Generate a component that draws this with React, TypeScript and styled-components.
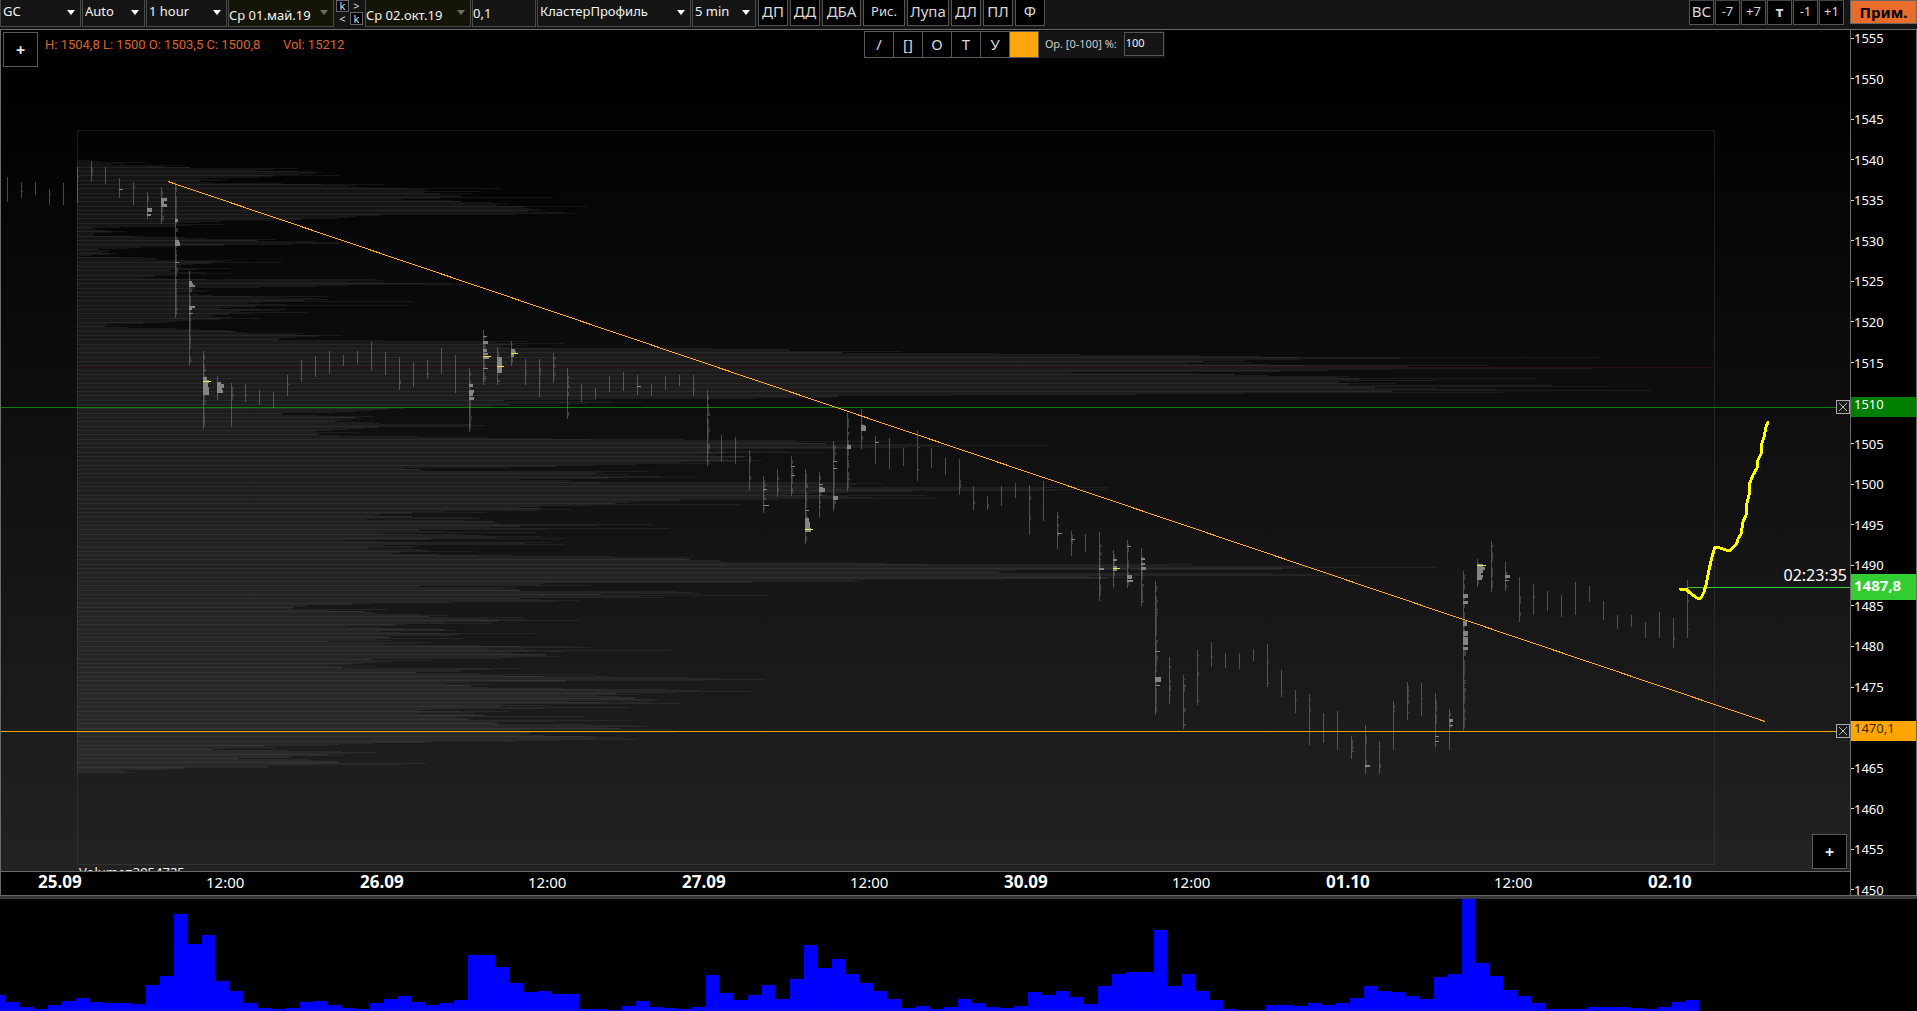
import React from "react";
import styled, { createGlobalStyle } from "styled-components";

const GlobalStyle = createGlobalStyle`
  * { box-sizing: border-box; }
  html, body, #root { height: 100%; }
  body {
    margin: 0;
    background: #000;
    color: #f2f2f2;
    font-family: "Noto Sans", "Open Sans", sans-serif;
    font-size: 13px;
    overflow: hidden;
  }
  button, input, select { font: inherit; color: inherit; margin: 0; }
`;

/* ---------- data ---------- */

const STEP = 14;
const FIRST_X = 7;
const CHART_TOP = 30;
const PROFILE_LEFT = 77;
const PROFILE_RIGHT = 1714;
const PROFILE_TOP = 160;

// right edge of the volume profile, one value per pixel row
const profile: number[] = [
  90, 100, 146, 125, 112, 185, 165, 190, 298, 275, 257, 313, 322, 316, 300, 339, 273, 259, 206, 228,
  222, 200, 210, 282, 384, 355, 349, 367, 500, 424, 428, 481, 424, 473, 440, 461, 461, 554, 440, 402,
  450, 461, 492, 508, 498, 496, 587, 524, 530, 540, 546, 528, 565, 574, 516, 380, 355, 349, 339, 302,
  282, 220, 200, 178, 225, 190, 175, 120, 92, 96, 106, 126, 112, 95, 94, 93, 143, 186, 206, 275,
  257, 316, 351, 339, 292, 224, 176, 142, 129, 98, 110, 107, 102, 117, 110, 92, 80, 143, 157, 155,
  232, 222, 281, 212, 192, 180, 176, 182, 230, 196, 170, 178, 206, 231, 176, 173, 155, 143, 167, 375,
  383, 347, 384, 453, 465, 349, 316, 261, 194, 196, 208, 206, 192, 176, 198, 212, 329, 282, 314, 328,
  304, 413, 261, 247, 286, 408, 255, 229, 220, 286, 278, 241, 308, 253, 229, 212, 216, 233, 260, 220,
  192, 178, 167, 143, 108, 118, 105, 127, 176, 200, 229, 235, 245, 304, 294, 342, 318, 294, 282, 278,
  384, 528, 494, 564, 514, 526, 503, 510, 713, 789, 790, 902, 842, 998, 1080, 1200, 1260, 1598, 1400, 1300,
  1246, 1203, 1251, 1188, 1266, 1488, 1408, 1500, 1592, 1391, 1330, 1280, 1071, 1194, 1235, 1269, 1349, 1337, 1538, 1359,
  1438, 1340, 1338, 1395, 1349, 1552, 1609, 1375, 1437, 1497, 1652, 1392, 1503, 1244, 1136, 952, 838, 832, 755, 597,
  504, 611, 642, 588, 509, 560, 491, 450, 404, 388, 373, 355, 335, 282, 282, 318, 375, 355, 363, 339,
  351, 335, 373, 380, 471, 485, 469, 378, 363, 347, 333, 316, 359, 320, 318, 341, 418, 488, 551, 684,
  795, 891, 801, 826, 934, 1048, 946, 909, 848, 726, 709, 787, 826, 726, 697, 715, 746, 744, 722, 728,
  762, 734, 681, 711, 636, 595, 556, 507, 404, 420, 426, 649, 603, 595, 628, 592, 660, 697, 608, 520,
  571, 558, 832, 882, 856, 791, 852, 1107, 1044, 1108, 1056, 913, 848, 811, 787, 926, 848, 873, 938, 779,
  681, 640, 628, 615, 739, 591, 538, 518, 540, 571, 535, 445, 486, 412, 380, 373, 412, 473, 480, 366,
  463, 494, 494, 500, 653, 596, 520, 490, 669, 547, 419, 445, 536, 382, 463, 482, 542, 498, 565, 431,
  343, 378, 550, 524, 565, 384, 418, 412, 369, 420, 428, 473, 400, 391, 437, 513, 613, 692, 685, 690,
  720, 722, 857, 886, 1192, 1170, 1305, 1436, 1295, 1282, 1015, 997, 1001, 1273, 1311, 1360, 1090, 1136, 1107, 1002,
  853, 861, 752, 545, 540, 590, 419, 516, 503, 520, 520, 677, 693, 700, 601, 770, 640, 663, 520, 538,
  579, 557, 453, 373, 353, 308, 305, 294, 293, 387, 329, 365, 371, 378, 420, 449, 429, 524, 486, 524,
  580, 498, 444, 492, 406, 395, 347, 382, 404, 445, 457, 380, 402, 535, 459, 451, 384, 390, 464, 378,
  394, 327, 431, 418, 386, 480, 575, 591, 524, 489, 670, 563, 510, 514, 545, 547, 560, 518, 500, 371,
  431, 392, 376, 363, 350, 329, 376, 342, 520, 493, 461, 460, 416, 480, 596, 503, 609, 690, 720, 763,
  702, 566, 471, 445, 490, 471, 471, 487, 564, 668, 700, 751, 676, 615, 640, 597, 620, 636, 634, 660,
  655, 566, 650, 680, 503, 551, 500, 630, 542, 430, 420, 509, 475, 419, 475, 485, 586, 456, 473, 469,
  633, 556, 493, 498, 586, 633, 650, 607, 620, 672, 520, 600, 675, 530, 520, 545, 596, 625, 595, 637,
  559, 515, 425, 372, 339, 327, 265, 276, 226, 212, 286, 341, 376, 351, 327, 344, 291, 289, 238, 309,
  314, 339, 339, 427, 402, 268, 267, 267, 185, 167, 121, 126, 137,
];

// high and low of every hourly bar
const ranges: [number, number][] = [
  [177, 202], [182, 198], [182, 195], [189, 205], [183, 205], [167, 203], [161, 182], [167, 184], [178, 198], [182, 205],
  [192, 219], [187, 224], [182, 318], [271, 365], [351, 429], [376, 400], [383, 427], [384, 402], [390, 405], [392, 408],
  [375, 396], [360, 382], [356, 377], [351, 374], [355, 366], [351, 364], [342, 370], [352, 375], [357, 390], [362, 387],
  [360, 378], [348, 374], [355, 393], [368, 432], [330, 385], [347, 385], [341, 366], [359, 385], [359, 397], [353, 383],
  [368, 419], [384, 402], [388, 399], [376, 392], [372, 391], [375, 395], [384, 396], [376, 390], [375, 386], [375, 396],
  [390, 466], [435, 462], [437, 464], [450, 490], [476, 513], [469, 497], [456, 496], [469, 544], [472, 518], [441, 511],
  [413, 491], [409, 449], [436, 464], [438, 469], [448, 466], [430, 481], [448, 468], [458, 475], [459, 495], [486, 510],
  [496, 510], [486, 506], [483, 498], [485, 535], [481, 521], [512, 549], [531, 556], [534, 552], [532, 601], [550, 588],
  [540, 588], [548, 606], [581, 715], [657, 704], [675, 729], [650, 705], [642, 667], [653, 668], [653, 669], [649, 661],
  [644, 687], [670, 697], [690, 713], [694, 745], [713, 743], [711, 750], [736, 759], [725, 774], [741, 774], [701, 750],
  [682, 720], [683, 716], [693, 748], [709, 750], [571, 731], [559, 587], [541, 592], [562, 591], [577, 622], [584, 615],
  [591, 611], [595, 617], [582, 615], [586, 602], [601, 620], [615, 629], [615, 627], [622, 638], [612, 638], [618, 648],
  [580, 638],
];

// heavy clusters: bar index, top, bottom, width
const clusters: [number, number, number, number][] = [
  [8, 189, 190, 4], [10, 208, 212, 5], [10, 214, 216, 4], [11, 198, 201, 6], [11, 201, 204, 3], [11, 204, 207, 6],
  [12, 219, 222, 3], [12, 240, 242, 4], [12, 242, 246, 5], [12, 262, 263, 4], [13, 281, 283, 3], [13, 283, 285, 4],
  [13, 285, 287, 6], [13, 306, 308, 6], [13, 308, 310, 3], [13, 313, 314, 4], [14, 377, 380, 4],
  [14, 380, 383, 6], [14, 383, 387, 5], [14, 387, 395, 6], [15, 382, 384, 4], [15, 384, 388, 7], [15, 388, 390, 5],
  [15, 390, 393, 6], [33, 384, 387, 4], [33, 390, 393, 5], [33, 393, 396, 4], [33, 397, 400, 5], [34, 336, 337, 4],
  [34, 341, 344, 5], [34, 349, 352, 4], [34, 353, 355, 5], [34, 356, 359, 6], [34, 368, 369, 5], [35, 357, 373, 5],
  [36, 349, 351, 4], [36, 351, 354, 5], [36, 354, 357, 3], [45, 386, 387, 4],
  [54, 489, 490, 4], [54, 505, 506, 6], [56, 466, 467, 4], [56, 475, 476, 4], [57, 510, 511, 4], [57, 518, 522, 4],
  [57, 522, 528, 5], [57, 528, 532, 6], [58, 484, 485, 4], [58, 487, 488, 4], [58, 488, 492, 6], [59, 461, 462, 4],
  [59, 468, 469, 4], [59, 496, 500, 5], [60, 445, 449, 4], [61, 425, 426, 4], [61, 426, 431, 5], [62, 442, 443, 4],
  [75, 533, 534, 5], [76, 539, 540, 4], [78, 568, 570, 5], [79, 559, 561, 4],
  [79, 566, 568, 4], [79, 569, 571, 4], [80, 546, 547, 4], [80, 575, 579, 5], [80, 580, 582, 6], [81, 558, 560, 4],
  [81, 563, 565, 4], [81, 567, 570, 5], [82, 651, 652, 5], [82, 677, 682, 6], [82, 685, 686, 5], [97, 765, 767, 5],
  [102, 736, 737, 4], [102, 741, 742, 4], [103, 719, 722, 4], [103, 725, 726, 4], [104, 594, 598, 5],
  [104, 601, 604, 5], [104, 621, 626, 4], [104, 631, 636, 5], [104, 637, 645, 5], [104, 647, 650, 5],
  [105, 564, 567, 6], [105, 567, 570, 8], [105, 570, 573, 6], [105, 573, 575, 4], [105, 575, 578, 6],
  [105, 578, 580, 5], [107, 575, 578, 5], [107, 580, 581, 4],
];

const peaks: [number, number, number][] = [
  [14, 381, 8], [34, 356, 8], [35, 366, 7], [36, 353, 7], [57, 529, 8], [79, 568, 7], [105, 565, 9],
];

const volumes = [
  16, 9, 4, 2, 6, 10, 13, 9, 8, 8, 7, 26, 35, 97, 67, 76, 30, 20, 8, 3, 2, 3, 9, 10, 6, 3, 2, 8, 12, 15, 9, 6, 8, 11,
  56, 56, 44, 28, 19, 20, 17, 17, 2, 2, 1, 5, 10, 4, 3, 2, 4, 36, 18, 11, 16, 26, 12, 32, 66, 43, 52, 37, 28, 20, 12,
  3, 5, 2, 4, 12, 8, 4, 3, 5, 19, 16, 20, 14, 7, 25, 37, 39, 39, 81, 25, 37, 20, 11, 2, 1, 1, 6, 6, 5, 8, 6, 8, 13,
  25, 20, 19, 15, 12, 34, 37, 112, 48, 35, 21, 15, 8, 2, 2, 2, 4, 4, 4, 3, 2, 4, 9, 11,
];

const forecast =
  "1680,589 1686,589 1690,593 1697,598 1701,598 1704,592 1706,585 1709,570 1712,557 1715,547 1720,548 1729,551 " +
  "1733,548 1737,543 1738,539 1741,534 1743,522 1746,515 1747,503 1749,495 1749,485 1753,475 1757,468 1758,460 " +
  "1761,454 1762,443 1764,437 1766,427 1768,422";

const prices = Array.from({ length: 22 }, (_, i) => 1555 - i * 5);
const taggedPrices = [1510, 1470];
const days = ["25.09", "26.09", "27.09", "30.09", "01.10", "02.10"];

const box = (x: number, y: number, w: number, h = 1) => `M${x} ${y}h${w}v${h}h${-w}z`;

const profilePath = profile.map((x, i) => box(PROFILE_LEFT, PROFILE_TOP + i, x - PROFILE_LEFT)).join("");

// rows on which two price steps fall on the same pixel
const doubledPath = Array.from({ length: 140 }, (_, k) => {
  const row = Math.floor(167.2 + k * 4.316) - PROFILE_TOP;
  const w = Math.min(profile[row], profile[row + 1] ?? 0, profile[row - 1] + 40) - PROFILE_LEFT;
  return box(PROFILE_LEFT, PROFILE_TOP + row, Math.max(w, 4));
}).join("");

const rangePath = ranges.map(([t, b], i) => box(FIRST_X + i * STEP, t, 1, b - t)).join("");

const noise = (a: number, b: number) => {
  const v = Math.sin(a * 12.9898 + b * 78.233) * 43758.5453;
  return v - Math.floor(v);
};

const detailPath = ranges
  .map(([t, b], i) => {
    const activity = Math.min(1, (volumes[i + 1] + 2) / 50);
    let d = "";
    for (let y = t + 4; y < b - 3; y++) {
      const n = noise(i, Math.floor(y / 4)) * 0.8 + noise(i, y) * 0.2;
      if (n < activity * 0.75) d += box(FIRST_X + i * STEP + 1, y, n < activity * 0.2 ? 2 : 1);
    }
    return d;
  })
  .join("");

const clusterPath = clusters.map(([i, t, b, w]) => box(FIRST_X + i * STEP, t, w, b - t)).join("");
const peakPath = peaks.map(([i, y, w]) => box(FIRST_X + i * STEP, y, w)).join("");

/* ---------- layout ---------- */

const Screen = styled.div`
  display: flex;
  flex-direction: column;
  min-width: 1200px;
  height: 100vh;
`;

const TopBar = styled.header`
  flex: none;
  display: flex;
  align-items: flex-start;
  height: 30px;
  background: #151515;
  border-bottom: 1px solid #6a6a6a;
`;

const Fields = styled.div`
  display: flex;
  gap: 1px;
`;

const ButtonRow = styled.div<{ $gap: number }>`
  display: flex;
  gap: ${(p) => p.$gap}px;
`;

const ToolGroup = styled(ButtonRow)`
  margin-left: 1px;
`;

const RightGroup = styled.div`
  display: flex;
  align-items: flex-start;
  gap: 6px;
  margin-left: auto;
`;

const Field = styled.label<{ $w: number; $olive?: boolean }>`
  position: relative;
  display: block;
  width: ${(p) => p.$w}px;
  height: 27px;
  background: ${(p) => (p.$olive ? "#151505" : "#151515")};
  border: 1px solid #4a4a4a;
  border-top: 0;
`;

const Pick = styled.select<{ $low?: boolean }>`
  appearance: none;
  display: block;
  width: 100%;
  height: 26px;
  padding: ${(p) => (p.$low ? "3px 0 0 0" : "0 0 5px 2px")};
  border: 0;
  background: transparent;
  font-size: 13px;
  line-height: 20px;
  outline: none;
`;

const Caret = styled.svg<{ $dim?: boolean }>`
  position: absolute;
  right: 5px;
  top: 10px;
  width: 8px;
  height: 5px;
  fill: ${(p) => (p.$dim ? "#6d6d68" : "#fff")};
  pointer-events: none;
`;

const Entry = styled.input`
  display: block;
  width: 100%;
  height: 26px;
  padding: 0;
  border: 0;
  background: transparent;
  font-size: 13px;
  outline: none;
`;

const Stepper = styled.div`
  display: grid;
  grid-template-columns: 13px 13px;
  grid-template-rows: 12px 13px;
  gap: 0 1px;
  padding: 0 1px;
`;

const StepButton = styled.button<{ $boxed?: boolean }>`
  display: grid;
  place-items: center;
  padding: 0;
  border: ${(p) => (p.$boxed ? "1px solid #666" : "0")};
  background: ${(p) => (p.$boxed ? "#000" : "transparent")};
  color: #ddd;
  font-size: 11px;
  line-height: 10px;
`;

const ToolButton = styled.button<{ $w: number; $size?: number; $bold?: boolean }>`
  width: ${(p) => p.$w}px;
  height: 26px;
  padding: 0 0 3px;
  border: 1px solid #555;
  border-top: 0;
  background: #000;
  color: #d8d8d8;
  font-size: ${(p) => p.$size ?? 15}px;
  font-weight: ${(p) => (p.$bold ? 700 : 400)};
  line-height: 20px;
  white-space: nowrap;
`;

const ShiftButton = styled(ToolButton)`
  height: 25px;
  border-top: 1px solid #444;
`;

const NoteButton = styled.button`
  width: 67px;
  height: 24px;
  padding: 0;
  border: 1px solid #666;
  background: #e86c2c;
  color: #000;
  font-size: 15px;
  font-weight: 700;
  line-height: 20px;
`;

const Workspace = styled.main`
  flex: 1;
  display: flex;
  min-height: 0;
  border-left: 1px solid #6a6a6a;
  border-right: 1px solid #6a6a6a;
  border-bottom: 1px solid #6a6a6a;
`;

const ChartColumn = styled.div`
  flex: 1;
  min-width: 0;
  display: flex;
  flex-direction: column;
`;

const ChartArea = styled.section`
  position: relative;
  flex: 1;
  min-height: 0;
  overflow: hidden;
  background: linear-gradient(#000 0%, #010101 8%, #222 100%);
`;

const ChartSvg = styled.svg`
  display: block;
  width: 100%;
  height: 100%;
`;

const ChartHead = styled.div`
  position: absolute;
  inset: 2px auto auto 2px;
  display: flex;
  align-items: flex-start;
  gap: 7px;
`;

const AddButton = styled.button<{ $corner?: boolean }>`
  width: 35px;
  height: 35px;
  padding: 0;
  border: 1px solid #5a5a5a;
  background: #000;
  color: #e8e8e8;
  font-size: 16px;
  font-weight: 700;
  ${(p) => p.$corner && "position: absolute; right: 3px; bottom: 2px;"}
`;

const Ohlc = styled.p`
  margin: 3px 0 0;
  color: #dc6428;
  font-family: Roboto, "Noto Sans", sans-serif;
  font-size: 13px;
  line-height: 20px;
  white-space: pre;
`;

const DrawBar = styled.div`
  position: absolute;
  left: 863px;
  top: 1px;
  display: flex;
  align-items: center;
  height: 27px;
  background: #151515;
`;

const DrawButton = styled.button<{ $fill?: string }>`
  width: 30px;
  height: 27px;
  margin-right: -1px;
  padding: 0 0 2px;
  border: 1px solid #5a5a5a;
  background: ${(p) => p.$fill ?? "#000"};
  color: #d8d8d8;
  font-size: 15px;
  line-height: 20px;
`;

const OpacityLabel = styled.label`
  display: flex;
  align-items: center;
  gap: 7px;
  padding: 0 1px 2px 7px;
  color: #ccc;
  font-size: 11px;
  white-space: nowrap;
`;

const OpacityInput = styled.input`
  width: 40px;
  height: 24px;
  padding: 0 0 2px 1px;
  border: 1px solid #555;
  background: #151515;
  color: #f2f2f2;
  font-size: 11px;
`;

const CloseLine = styled.button`
  position: absolute;
  right: 0;
  width: 14px;
  height: 14px;
  padding: 0;
  border: 1px solid #aaa;
  background: #1a1a1a;
  svg { display: block; width: 12px; height: 12px; stroke: #bbb; }
`;

const Countdown = styled.time`
  position: absolute;
  right: 3px;
  font-size: 16px;
  line-height: 20px;
  color: #fff;
`;

const VolumeTotal = styled.p`
  position: absolute;
  left: 78px;
  bottom: -11px;
  margin: 0;
  font-size: 13px;
  line-height: 20px;
`;

const TimeAxis = styled.div`
  flex: none;
  display: flex;
  height: 24px;
  padding-left: 37px;
  border-top: 1px solid #6a6a6a;
  background: #000;
  overflow: hidden;
`;

const TimeMark = styled.span<{ $day?: boolean }>`
  flex: none;
  width: ${(p) => (p.$day ? 168 : 154)}px;
  color: #fff;
  font-size: ${(p) => (p.$day ? 17 : 15)}px;
  font-weight: ${(p) => (p.$day ? 700 : 400)};
  line-height: 20px;
`;

const PriceAxis = styled.aside`
  position: relative;
  flex: none;
  display: flex;
  flex-direction: column;
  width: 66px;
  border-left: 1px solid #6a6a6a;
  background: #000;
  overflow: hidden;
`;

const PriceList = styled.ol`
  flex: 1;
  display: flex;
  flex-direction: column;
  justify-content: space-between;
  margin: -1px 0 -4px;
  padding: 0;
  list-style: none;
`;

const Price = styled.li`
  display: flex;
  align-items: center;
  height: 18px;
  color: #fff;
  font-size: 13px;
  &::before { content: ""; width: 3px; height: 1px; background: #ddd; }
`;

const PriceTag = styled.output<{ $bg: string; $fg: string; $h: number; $bold?: boolean }>`
  position: absolute;
  left: 0;
  right: 0;
  height: ${(p) => p.$h}px;
  padding-left: 3px;
  background: ${(p) => p.$bg};
  color: ${(p) => p.$fg};
  font-size: ${(p) => (p.$bold ? 15 : 13)}px;
  font-weight: ${(p) => (p.$bold ? 700 : 400)};
  line-height: ${(p) => (p.$bold ? 22 : 14)}px;
`;

const Splitter = styled.div`
  flex: none;
  height: 3px;
  background: #38383c;
`;

const VolumePanel = styled.section`
  flex: none;
  height: 112px;
  background: #000;
`;

/* ---------- parts ---------- */

function Select(p: { label: string; value: string; w: number; date?: boolean }) {
  return (
    <Field $w={p.w} $olive={p.date}>
      <Pick aria-label={p.label} $low={p.date} defaultValue={p.value}>
        <option>{p.value}</option>
      </Pick>
      <Caret $dim={p.date} viewBox="0 0 8 5">
        <path d="M0 0h8L4 5z" />
      </Caret>
    </Field>
  );
}

const tools: [string, number, number?][] = [
  ["ДП", 30], ["ДД", 30], ["ДБА", 39], ["Рис.", 42, 13], ["Лупа", 42], ["ДЛ", 30], ["ПЛ", 30], ["Ф", 30],
];

const shifts: [string, number, boolean?][] = [
  ["ВС", 15], ["-7", 13], ["+7", 13], ["т", 15, true], ["-1", 13], ["+1", 13],
];

function LineClose({ y }: { y: number }) {
  return (
    <CloseLine aria-label="Удалить уровень" style={{ top: y - CHART_TOP - 7 }}>
      <svg viewBox="0 0 12 12">
        <path d="M2 2l8 8M10 2l-8 8" />
      </svg>
    </CloseLine>
  );
}

function Chart() {
  return (
    <ChartArea>
      <ChartSvg shapeRendering="crispEdges">
        <g transform={`translate(-1 ${-CHART_TOP})`}>
          <path d={profilePath} fill="#808080" fillOpacity={0.13} />
          <path d={doubledPath} fill="#808080" fillOpacity={0.13} />
          <path d={box(PROFILE_LEFT, 367, PROFILE_RIGHT - PROFILE_LEFT)} fill="#3a0c0c" fillOpacity={0.8} />
          <rect
            x={PROFILE_LEFT + 0.5}
            y={130.5}
            width={PROFILE_RIGHT - PROFILE_LEFT}
            height={734}
            fill="none"
            stroke="#808080"
            strokeOpacity={0.18}
          />
          <rect x={1} y={407} width="100%" height={1} fill="#0a800a" />
          <rect x={1} y={731} width="100%" height={1} fill="#ffa500" />
          <path d={rangePath} fill="#8c8c8c" fillOpacity={0.5} />
          <path d={detailPath} fill="#8c8c8c" fillOpacity={0.35} />
          <path d={clusterPath} fill="#858585" />
          <path d={peakPath} fill="#f5e63c" />
          <line x1={168} y1={181.5} x2={1765} y2={721.5} stroke="#ffa51e" />
          <rect x={1687} y={587} width="100%" height={1} fill="#32cd32" />
        </g>
        <polyline
          points={forecast}
          transform={`translate(-1 ${-CHART_TOP})`}
          fill="none"
          stroke="#ff0"
          strokeWidth={3}
          strokeLinejoin="round"
          strokeLinecap="round"
        />
      </ChartSvg>
      <ChartHead>
        <AddButton aria-label="Добавить">+</AddButton>
        <Ohlc>{"H: 1504,8 L: 1500 O: 1503,5 C: 1500,8       Vol: 15212"}</Ohlc>
      </ChartHead>
      <DrawBar>
        {["/", "[]", "О", "Т", "У"].map((t) => (
          <DrawButton key={t}>{t}</DrawButton>
        ))}
        <DrawButton $fill="#ffa60d" aria-label="Цвет" />
        <OpacityLabel>
          Ор. [0-100] %:
          <OpacityInput defaultValue="100" />
        </OpacityLabel>
      </DrawBar>
      <LineClose y={407} />
      <LineClose y={731} />
      <Countdown style={{ top: 565 - CHART_TOP }}>02:23:35</Countdown>
      <VolumeTotal>Volume=3954725</VolumeTotal>
      <AddButton $corner aria-label="Добавить индикатор">+</AddButton>
    </ChartArea>
  );
}

export default function App() {
  return (
    <Screen>
      <GlobalStyle />
      <TopBar>
        <Fields>
          <Select label="Инструмент" value="GC" w={81} />
          <Select label="Масштаб" value="Auto" w={63} />
          <Select label="Период" value="1 hour" w={81} />
          <Select label="Начало" value="Ср 01.май.19" w={106} date />
          <Stepper>
            <StepButton $boxed>k</StepButton>
            <StepButton>&gt;</StepButton>
            <StepButton>&lt;</StepButton>
            <StepButton $boxed>k</StepButton>
          </Stepper>
          <Select label="Конец" value="Ср 02.окт.19" w={106} date />
          <Field $w={64}>
            <Entry aria-label="Шаг цены" defaultValue="0,1" />
          </Field>
          <Select label="Тип графика" value="КластерПрофиль" w={154} />
          <Select label="Интервал" value="5 min" w={64} />
          <ToolGroup $gap={2}>
            {tools.map(([t, w, s]) => (
              <ToolButton key={t} $w={w} $size={s}>{t}</ToolButton>
            ))}
          </ToolGroup>
        </Fields>
        <RightGroup>
          <ButtonRow $gap={1}>
            {shifts.map(([t, s, b]) => (
              <ShiftButton key={t} $w={25} $size={s} $bold={b}>{t}</ShiftButton>
            ))}
          </ButtonRow>
          <NoteButton>Прим.</NoteButton>
        </RightGroup>
      </TopBar>
      <Workspace>
        <ChartColumn>
          <Chart />
          <TimeAxis>
            {days.map((d, i) => (
              <React.Fragment key={d}>
                <TimeMark $day>{d}</TimeMark>
                {i < days.length - 1 && <TimeMark>12:00</TimeMark>}
              </React.Fragment>
            ))}
          </TimeAxis>
        </ChartColumn>
        <PriceAxis>
          <PriceList>
            {prices.map((p) => (
              <Price key={p}>{taggedPrices.includes(p) ? null : p}</Price>
            ))}
          </PriceList>
          <PriceTag $bg="#008000" $fg="#fff" $h={20} style={{ top: 397 - CHART_TOP }}>1510</PriceTag>
          <PriceTag $bg="#32cd32" $fg="#fff" $h={26} $bold style={{ top: 574 - CHART_TOP }}>1487,8</PriceTag>
          <PriceTag $bg="#ffa500" $fg="#3a2600" $h={20} style={{ top: 721 - CHART_TOP }}>1470,1</PriceTag>
        </PriceAxis>
      </Workspace>
      <Splitter />
      <VolumePanel>
        <ChartSvg shapeRendering="crispEdges">
          {volumes.map((h, i) => (
            <rect key={i} x={-8 + i * STEP} y={112 - h} width={13} height={h} fill="#00f" />
          ))}
        </ChartSvg>
      </VolumePanel>
    </Screen>
  );
}
